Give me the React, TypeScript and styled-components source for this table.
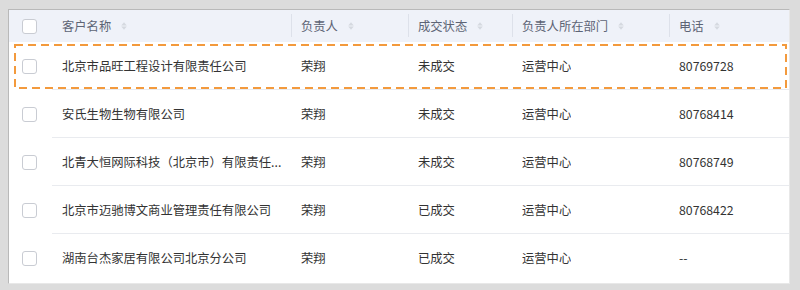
import React from 'react';
import styled, { createGlobalStyle } from 'styled-components';

const GlobalStyle = createGlobalStyle`
  html, body {
    margin: 0;
    padding: 0;
    background: #dcdcdc;
  }
`;

const Page = styled.div`
  box-sizing: border-box;
  width: 800px;
  height: 290px;
  padding: 9px 10px 8px 8px;
  font-family: 'Noto Sans CJK SC', 'Noto Sans', sans-serif;
  font-size: 12.3px;
  overflow: hidden;
`;

const Panel = styled.div`
  height: 100%;
  background: #fff;
  border: 1px solid #b9b9b9;
  border-right-color: #e8e8e8;
  border-bottom-color: #e8e8e8;
  overflow: hidden;
`;

const columns = '43px 239px 117px 104px 157px 1fr';

const HeaderRow = styled.div`
  display: grid;
  grid-template-columns: ${columns};
  height: 32px;
  background: #eff2f9;
  color: #5d6475;
`;

const HeaderCell = styled.div<{ $divider?: boolean }>`
  position: relative;
  display: flex;
  align-items: center;
  gap: 10px;
  padding-left: 10px;

  &::before {
    content: '';
    display: ${(p) => (p.$divider ? 'block' : 'none')};
    position: absolute;
    left: 0;
    top: 4px;
    bottom: 5px;
    width: 1px;
    background: #dde1ea;
  }
`;

const Row = styled.div`
  position: relative;
  display: grid;
  grid-template-columns: ${columns};
  height: 48px;
  color: #333;
`;

const Cell = styled.div<{ $line?: boolean }>`
  display: flex;
  align-items: center;
  min-width: 0;
  padding: 0 6px 0 10px;
  border-bottom: 1px solid ${(p) => (p.$line ? '#e9ebef' : 'transparent')};
`;

const CheckCell = styled.div`
  display: flex;
  align-items: center;
  padding-left: 13px;
`;

const Text = styled.span`
  white-space: nowrap;
  overflow: hidden;
  text-overflow: ellipsis;
`;

const Checkbox = styled.span`
  box-sizing: border-box;
  width: 15px;
  height: 15px;
  border: 1px solid #c9ccd3;
  border-radius: 3px;
  background: #fff;
`;

const Highlight = styled.svg`
  position: absolute;
  left: 5px;
  top: 2px;
  width: 773px;
  height: 45px;
  pointer-events: none;
`;

const SortIcon = () => (
  <svg width="6" height="8" viewBox="0 0 6 8">
    <path d="M3 0.3 L5.8 3.4 L0.2 3.4 Z" fill="#d5d9e0" />
    <path d="M3 7.7 L5.8 4.6 L0.2 4.6 Z" fill="#d5d9e0" />
  </svg>
);

const headers = ['客户名称', '负责人', '成交状态', '负责人所在部门', '电话'];

const rows = [
  ['北京市品旺工程设计有限责任公司', '荣翔', '未成交', '运营中心', '80769728'],
  ['安氏生物生物有限公司', '荣翔', '未成交', '运营中心', '80768414'],
  ['北青大恒网际科技（北京市）有限责任...', '荣翔', '未成交', '运营中心', '80768749'],
  ['北京市迈驰博文商业管理责任有限公司', '荣翔', '已成交', '运营中心', '80768422'],
  ['湖南台杰家居有限公司北京分公司', '荣翔', '已成交', '运营中心', '--'],
];

export default function App() {
  return (
    <>
      <GlobalStyle />
      <Page>
        <Panel>
          <HeaderRow>
            <CheckCell>
              <Checkbox />
            </CheckCell>
            {headers.map((h, i) => (
              <HeaderCell key={h} $divider={i > 0}>
                {h}
                <SortIcon />
              </HeaderCell>
            ))}
          </HeaderRow>
          {rows.map((r, ri) => (
            <Row key={ri}>
              <CheckCell>
                <Checkbox />
              </CheckCell>
              {r.map((v, ci) => (
                <Cell key={ci} $line={ri < rows.length - 1}>
                  <Text>{v}</Text>
                </Cell>
              ))}
              {ri === 0 && (
                <Highlight viewBox="0 0 773 45">
                  <rect
                    x="1"
                    y="1"
                    width="771"
                    height="43"
                    fill="none"
                    stroke="#f39a3d"
                    strokeWidth="2"
                    strokeDasharray="8 5"
                  />
                </Highlight>
              )}
            </Row>
          ))}
        </Panel>
      </Page>
    </>
  );
}
